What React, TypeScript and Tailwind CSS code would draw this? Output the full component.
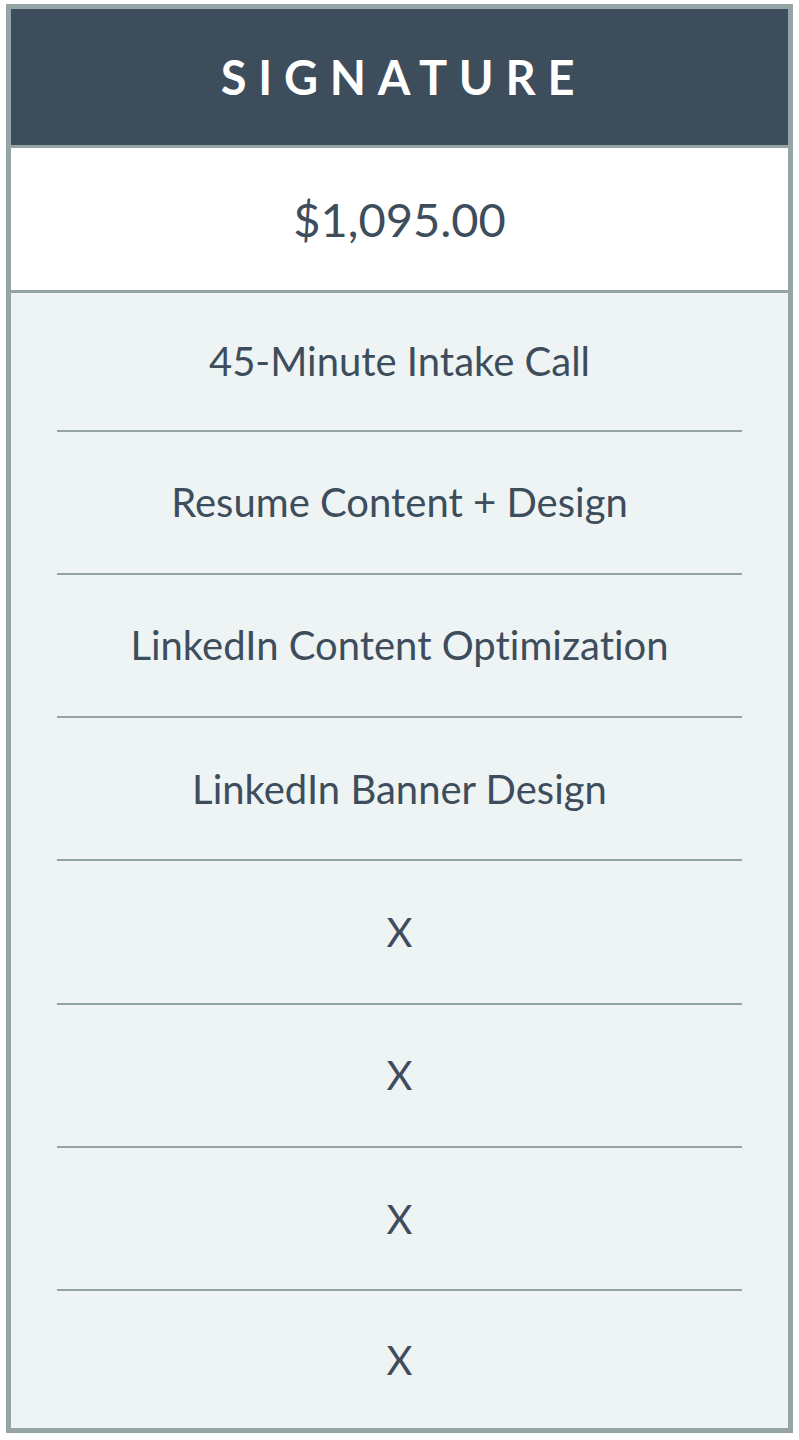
const features = [
  "45-Minute Intake Call",
  "Resume Content + Design",
  "LinkedIn Content Optimization",
  "LinkedIn Banner Design",
  "X",
  "X",
  "X",
  "X",
];

const App = () => {
  return (
    // page
    <div className="w-[799px] bg-white pt-[4px] pl-[6px] font-['Lato','Liberation_Sans',sans-serif] text-[#3d4d5c] [font-variant-ligatures:none]">
      {/* card */}
      <div className="w-[787px] border-[5px] border-[#95a5a6] bg-[#eef4f4]">
        {/* header */}
        <div className="flex h-[139px] items-center justify-center bg-[#3d4d5c] border-b-[3px] border-[#95a5a6]">
          <h2 className="pl-[0.17em] text-[47px] font-bold uppercase tracking-[0.25em] text-white">
            Signature
          </h2>
        </div>
        {/* price */}
        <div className="flex h-[145px] items-center justify-center bg-white border-b-[3px] border-[#95a5a6]">
          <span className="text-[47px]">$1,095.00</span>
        </div>
        {/* features */}
        <ul className="px-[46px]">
          {features.map((item, index) => (
            <li
              key={index}
              className={
                index === features.length - 1
                  ? "flex h-[137px] items-center justify-center text-[40px]"
                  : index === 0
                  ? "flex h-[138.5px] items-center justify-center border-b-[2.5px] border-[#94a4a5] text-[40px]"
                  : "flex h-[143.3px] items-center justify-center border-b-[2.5px] border-[#94a4a5] text-[40px]"
              }
            >
              {item}
            </li>
          ))}
        </ul>
      </div>
    </div>
  );
};

export default App;
